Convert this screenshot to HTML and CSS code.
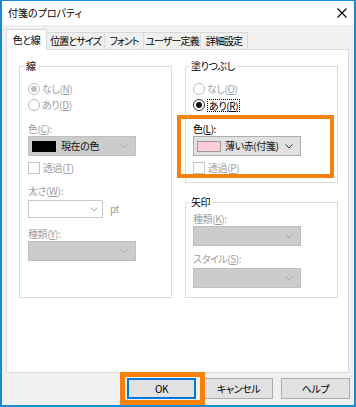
FILE: index.html
```html
<!DOCTYPE html>
<html lang="ja">
  <head>
    <meta charset="UTF-8" />
    <meta name="viewport" content="width=device-width, initial-scale=1.0" />
    <title>付箋のプロパティ</title>
    <link rel="stylesheet" href="styles.css">
  </head>
  <body>
    <div class="window">
      <div class="titlebar">
        <span class="title">付箋のプロパティ</span>
        <svg class="close" width="10" height="10" viewBox="0 0 10 10">
          <path d="M0.5 0.5 L9.5 9.5 M9.5 0.5 L0.5 9.5" stroke="#000" stroke-width="1.1" fill="none" />
        </svg>
      </div>

      <div class="tabs">
        <div class="tab active">色と線</div>
        <div class="tab tab-pos">位置とサイズ</div>
        <div class="tab tab-font">フォント</div>
        <div class="tab tab-user">ユーザー定義</div>
        <div class="tab tab-detail">詳細設定</div>
      </div>

      <div class="panel">
        <div class="columns">
          <fieldset class="group">
            <legend>線</legend>
            <div class="radio-row first disabled">
              <span class="radio checked"></span>なし(<u>N</u>)
            </div>
            <div class="radio-row disabled">
              <span class="radio"></span>あり(<u>D</u>)
            </div>
            <div class="label disabled">色(<u>C</u>):</div>
            <div class="combo combo-disabled">
              <span class="swatch swatch-black"></span>
              <span class="combo-text">現在の色</span>
              <svg class="chevron" width="8" height="5" viewBox="0 0 8 5">
                <polyline points="0.5,0.5 4,4 7.5,0.5" fill="none" stroke="#a8a8a8" />
              </svg>
            </div>
            <div class="check-row disabled">
              <span class="checkbox"></span>透過(<u>T</u>)
            </div>
            <div class="label label-gap disabled">太さ(<u>W</u>):</div>
            <div class="spin-row">
              <div class="spin">
                <svg class="chevron" width="8" height="5" viewBox="0 0 8 5">
                  <polyline points="0.5,0.5 4,4 7.5,0.5" fill="none" stroke="#a8a8a8" />
                </svg>
              </div>
              <span class="unit disabled">pt</span>
            </div>
            <div class="label disabled">種類(<u>Y</u>):</div>
            <div class="combo combo-disabled">
              <svg class="chevron" width="8" height="5" viewBox="0 0 8 5">
                <polyline points="0.5,0.5 4,4 7.5,0.5" fill="none" stroke="#a8a8a8" />
              </svg>
            </div>
          </fieldset>

          <div class="column">
            <fieldset class="group group-fill">
              <legend>塗りつぶし</legend>
              <div class="radio-row first disabled">
                <span class="radio"></span>なし(<u>O</u>)
              </div>
              <div class="radio-row">
                <span class="radio checked active"></span><span class="focus">あり(<u>R</u>)</span>
              </div>
              <div class="label">色(<u>L</u>):</div>
              <div class="combo">
                <span class="swatch swatch-pink"></span>
                <span class="combo-text">薄い赤(付箋)</span>
                <svg class="chevron" width="8" height="5" viewBox="0 0 8 5">
                  <polyline points="0.5,0.5 4,4 7.5,0.5" fill="none" stroke="#333" />
                </svg>
              </div>
              <div class="check-row disabled">
                <span class="checkbox"></span>透過(<u>P</u>)
              </div>
            </fieldset>

            <fieldset class="group group-arrow">
              <legend>矢印</legend>
              <div class="label label-top disabled">種類(<u>K</u>):</div>
              <div class="combo combo-disabled">
                <svg class="chevron" width="8" height="5" viewBox="0 0 8 5">
                  <polyline points="0.5,0.5 4,4 7.5,0.5" fill="none" stroke="#a8a8a8" />
                </svg>
              </div>
              <div class="label label-style disabled">スタイル(<u>S</u>):</div>
              <div class="combo combo-disabled combo-style">
                <svg class="chevron" width="8" height="5" viewBox="0 0 8 5">
                  <polyline points="0.5,0.5 4,4 7.5,0.5" fill="none" stroke="#a8a8a8" />
                </svg>
              </div>
            </fieldset>
          </div>
        </div>
      </div>

      <div class="buttons">
        <div class="button default">OK</div>
        <div class="button">キャンセル</div>
        <div class="button">ヘルプ</div>
      </div>

      <div class="highlight highlight-color"></div>
      <div class="highlight highlight-ok"></div>
    </div>
  </body>
</html>
```

FILE: styles.css
```css
* {
  box-sizing: border-box;
  margin: 0;
  padding: 0;
}

body {
  font-family: "Noto Sans CJK JP", "Noto Sans", sans-serif;
  font-size: 10px;
  line-height: 14px;
  letter-spacing: -0.4px;
  font-feature-settings: "palt";
  color: #000;
  background-color: #fff;
}

.window {
  position: relative;
  width: 356px;
  height: 407px;
  border: 2px solid #1a8ad8;
  border-top-width: 1px;
  background-color: #f0f0f0;
}

.titlebar {
  display: flex;
  align-items: center;
  justify-content: space-between;
  height: 24px;
  padding: 0 6px;
  background-color: #fff;
}

.title {
  letter-spacing: 0;
}

.close {
  display: block;
  margin-right: 1px;
}

/* tabs */
.tabs {
  display: flex;
  align-items: flex-end;
  height: 20px;
  margin-top: 4px;
  padding-left: 4px;
}

.tab {
  height: 17px;
  margin-left: -1px;
  border: 1px solid #d9d9d9;
  border-bottom: none;
  background-color: #f0f0f0;
  line-height: 15px;
  letter-spacing: -0.9px;
  text-align: center;
  white-space: nowrap;
}

.tab.active {
  position: relative;
  z-index: 1;
  width: 41px;
  height: 21px;
  margin-left: 0;
  margin-bottom: -1px;
  background-color: #fff;
  line-height: 20px;
  letter-spacing: -0.4px;
}

.tab-pos {
  width: 59px;
}

.tab-font {
  width: 40px;
}

.tab-user {
  width: 58px;
}

.tab-detail {
  width: 48px;
}

.panel {
  height: 324px;
  margin: 0 5px 0 4px;
  padding: 9px 10px 0 12px;
  background-color: #fff;
  border: 1px solid #d9d9d9;
}

.columns {
  display: grid;
  grid-template-columns: 153px 153px;
  column-gap: 13px;
}

.column {
  display: flex;
  flex-direction: column;
}

/* group boxes */
.group {
  min-width: 0;
  padding: 0 8px;
  border: 1px solid #dcdcdc;
}

.group-fill {
  padding: 0 7px 6px;
}

.group-arrow {
  margin-top: 12px;
  padding: 0 7px 9px;
}

legend {
  margin-left: -4px;
  padding: 0 2px;
  line-height: 14px;
}

.disabled {
  color: #a0a0a0;
}

.radio-row,
.check-row {
  display: flex;
  align-items: center;
  height: 16px;
  white-space: nowrap;
}

.radio-row.first {
  margin-top: 8px;
}

.check-row {
  margin-top: 4px;
}

.radio {
  position: relative;
  width: 12px;
  height: 12px;
  margin-right: 2px;
  border: 1px solid #bcbcbc;
  border-radius: 50%;
  background-color: #fff;
}

.radio.checked::after {
  content: "";
  position: absolute;
  left: 2px;
  top: 2px;
  width: 6px;
  height: 6px;
  border-radius: 50%;
  background-color: #bcbcbc;
}

.radio.active {
  border-color: #333;
}

.radio.active::after {
  background-color: #111;
}

.focus {
  padding: 0 1px;
  border: 1px dotted #000;
  line-height: 11px;
}

.checkbox {
  width: 12px;
  height: 12px;
  margin-right: 3px;
  border: 1px solid #c4c4c4;
  background-color: #fff;
}

.label {
  margin-top: 9px;
  height: 14px;
  white-space: nowrap;
}

.label-gap {
  margin-top: 8px;
}

.label-top {
  margin-top: 3px;
}

.label-style {
  margin-top: 6px;
}

/* combo boxes */
.combo {
  display: flex;
  align-items: center;
  width: 108px;
  height: 20px;
  padding: 0 7px 0 3px;
  border: 1px solid #adadad;
  background-color: #e1e1e1;
}

.combo-disabled {
  border-color: #bfbfbf;
  background-color: #cccccc;
}

.combo-style {
  margin-top: 2px;
}

.swatch {
  flex: none;
  width: 24px;
  height: 11px;
  margin-right: 5px;
}

.swatch-black {
  background-color: #000;
}

.swatch-pink {
  margin-right: 4px;
  border: 1px solid #9a9a9a;
  background-color: #ffcdd9;
}

.combo-text {
  flex: 1;
  overflow: hidden;
  white-space: nowrap;
  color: #111;
}

.chevron {
  display: block;
  flex: none;
  margin-left: auto;
}

.spin-row {
  display: flex;
  align-items: center;
  margin-top: 2px;
  height: 18px;
}

.spin {
  display: flex;
  align-items: center;
  width: 75px;
  height: 18px;
  padding-right: 4px;
  border: 1px solid #c8c8c8;
  background-color: #fff;
}

.unit {
  margin-left: 7px;
}

/* buttons */
.buttons {
  display: flex;
  justify-content: flex-end;
  gap: 8px;
  margin-top: 5px;
  padding-right: 4px;
}

.button {
  width: 69px;
  height: 21px;
  border: 1px solid #adadad;
  background-color: #e1e1e1;
  text-align: center;
  line-height: 19px;
}

.button.default {
  border-color: #0078d7;
  box-shadow: inset 0 0 0 1px #0078d7;
}

/* annotation frames */
.highlight {
  position: absolute;
  border: 4px solid #f5820a;
}

.highlight-color {
  left: 175px;
  top: 114px;
  width: 157px;
  height: 63px;
}

.highlight-ok {
  left: 118px;
  top: 371px;
  width: 85px;
  height: 33px;
  border-width: 5px;
}
```
